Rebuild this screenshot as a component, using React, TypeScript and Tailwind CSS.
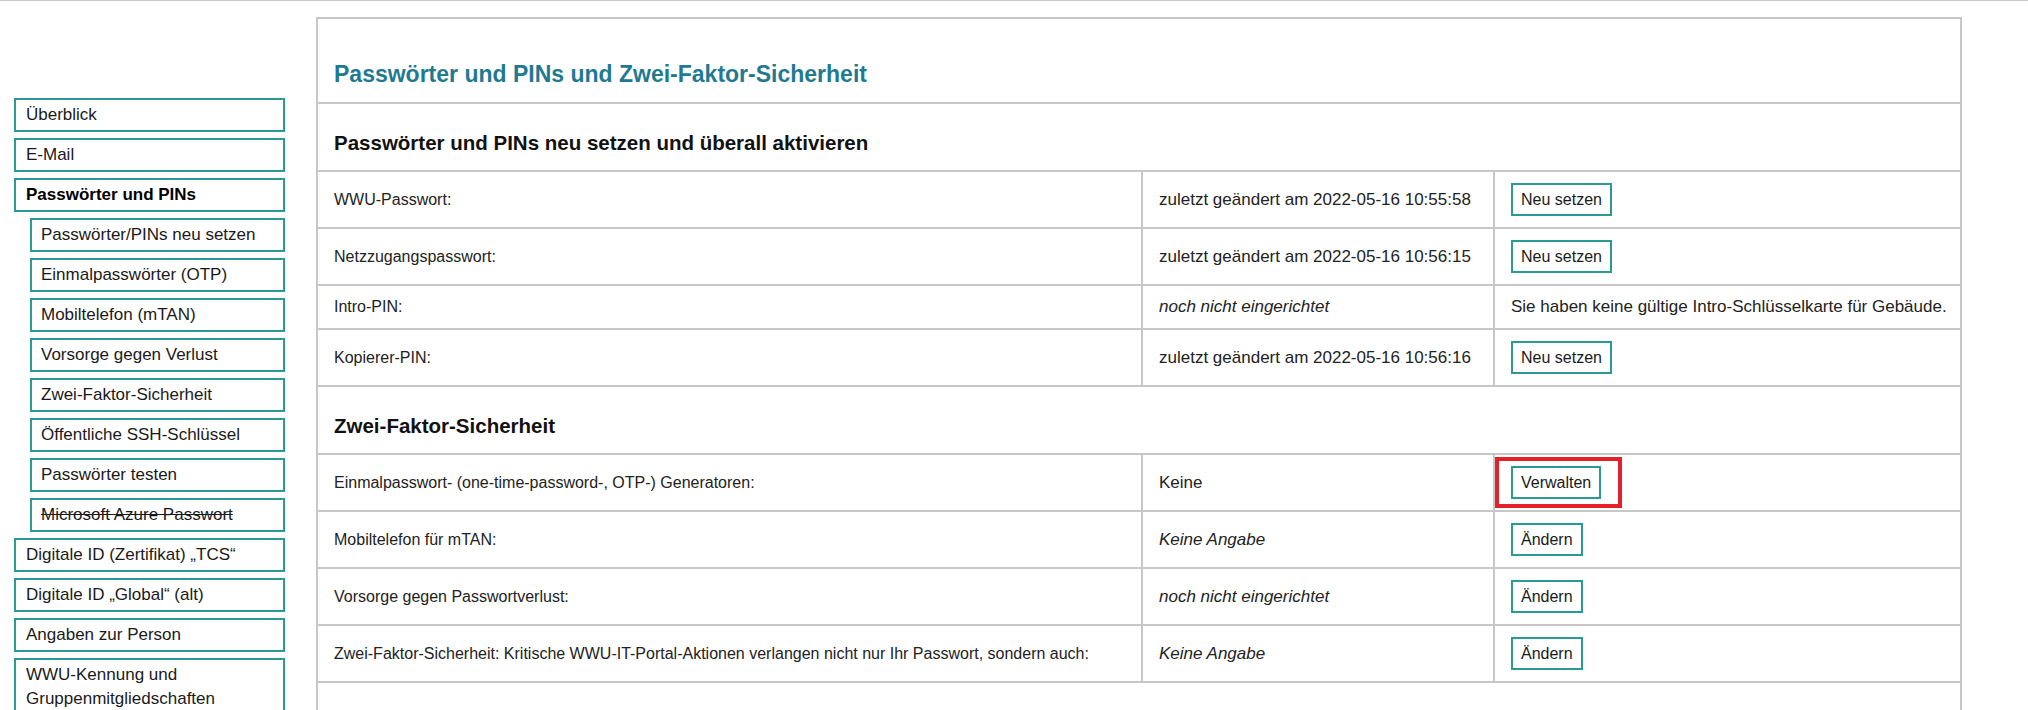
const nav = [
  { label: 'Überblick', level: 0 },
  { label: 'E-Mail', level: 0 },
  { label: 'Passwörter und PINs', level: 0, active: true },
  { label: 'Passwörter/PINs neu setzen', level: 1 },
  { label: 'Einmalpasswörter (OTP)', level: 1 },
  { label: 'Mobiltelefon (mTAN)', level: 1 },
  { label: 'Vorsorge gegen Verlust', level: 1 },
  { label: 'Zwei-Faktor-Sicherheit', level: 1 },
  { label: 'Öffentliche SSH-Schlüssel', level: 1 },
  { label: 'Passwörter testen', level: 1 },
  { label: 'Microsoft Azure Passwort', level: 1, struck: true },
  { label: 'Digitale ID (Zertifikat) „TCS“', level: 0 },
  { label: 'Digitale ID „Global“ (alt)', level: 0 },
  { label: 'Angaben zur Person', level: 0 },
  { label: 'WWU-Kennung und Gruppenmitgliedschaften', level: 0 },
];

type Row = {
  label: string;
  status: string;
  italic?: boolean;
  action?: string;
  note?: string;
  marked?: boolean;
};

const passwordRows: Row[] = [
  { label: 'WWU-Passwort:', status: 'zuletzt geändert am 2022-05-16 10:55:58', action: 'Neu setzen' },
  { label: 'Netzzugangspasswort:', status: 'zuletzt geändert am 2022-05-16 10:56:15', action: 'Neu setzen' },
  { label: 'Intro-PIN:', status: 'noch nicht eingerichtet', italic: true, note: 'Sie haben keine gültige Intro-Schlüsselkarte für Gebäude.' },
  { label: 'Kopierer-PIN:', status: 'zuletzt geändert am 2022-05-16 10:56:16', action: 'Neu setzen' },
];

const twoFactorRows: Row[] = [
  { label: 'Einmalpasswort- (one-time-password-, OTP-) Generatoren:', status: 'Keine', action: 'Verwalten', marked: true },
  { label: 'Mobiltelefon für mTAN:', status: 'Keine Angabe', italic: true, action: 'Ändern' },
  { label: 'Vorsorge gegen Passwortverlust:', status: 'noch nicht eingerichtet', italic: true, action: 'Ändern' },
  { label: 'Zwei-Faktor-Sicherheit: Kritische WWU-IT-Portal-Aktionen verlangen nicht nur Ihr Passwort, sondern auch:', status: 'Keine Angabe', italic: true, action: 'Ändern' },
];

function TableRow({ row }: { row: Row }) {
  const h = row.action ? 'h-[55px]' : 'h-[42px]';
  return (
    <div className="grid grid-cols-[823px_352px_1fr] border-b-2 border-[#c5c7c9]">
      <div className={`${h} flex items-center pl-4`}>{row.label}</div>
      <div className={`${h} flex items-center pl-4 border-l-2 border-[#c5c7c9] text-[17px] ${row.italic ? 'italic' : ''}`}>{row.status}</div>
      <div className={`${h} relative flex items-center pl-4 border-l-2 border-[#c5c7c9]`}>
        {row.action ? (
          <button className="h-[33px] px-2 border-2 border-[#2a9b94] bg-white text-[#1a1a1a] leading-[19px]">{row.action}</button>
        ) : (
          <span className="text-[17px]">{row.note}</span>
        )}
        {row.marked && (
          <div className="absolute left-0 top-[2px] w-[127px] h-[51px] border-4 border-[#e2212b]" />
        )}
      </div>
    </div>
  );
}

function Heading({ text }: { text: string }) {
  return (
    <div className="border-b-2 border-[#c5c7c9] pl-4 pt-[26px] pb-[14px] text-[20.5px] leading-[26px] font-bold text-[#111]">
      {text}
    </div>
  );
}

export default function App() {
  return (
    <div className="min-h-screen bg-white border-t border-[#c8c8c8] font-['Liberation_Sans',Arial,sans-serif] text-[#222]">
      <div className="flex items-start">
        <nav className="pl-[14px] pt-[97px] w-[285px] shrink-0 flex flex-col gap-[6px]">
          {nav.map(item => (
            <div
              key={item.label}
              className={`border-2 border-[#2a9b94] py-[3px] text-[17px] leading-[24px] text-[#1a1a1a] ${item.level === 1 ? 'ml-4 pl-[9px]' : 'pl-[10px]'} ${item.active ? 'font-bold text-[16px] text-black' : ''} ${item.struck ? 'line-through' : ''}`}
            >
              {item.label}
            </div>
          ))}
        </nav>

        <main className="ml-[31px] mt-4 w-[1646px] border-2 border-[#c5c7c9] text-[16px]">
          <div className="border-b-2 border-[#c5c7c9] pl-4 pt-[41px] pb-[14px] text-[23px] leading-[28px] font-bold text-[#1f7a91]">
            Passwörter und PINs und Zwei-Faktor-Sicherheit
          </div>
          <Heading text="Passwörter und PINs neu setzen und überall aktivieren" />
          {passwordRows.map(r => <TableRow key={r.label} row={r} />)}
          <Heading text="Zwei-Faktor-Sicherheit" />
          {twoFactorRows.map(r => <TableRow key={r.label} row={r} />)}
          <div className="h-[120px]" />
        </main>
      </div>
    </div>
  );
}
